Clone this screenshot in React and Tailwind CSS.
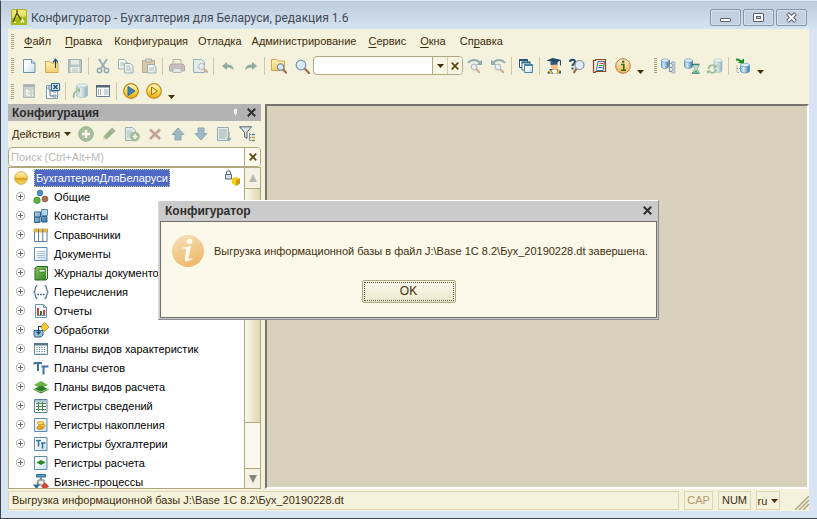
import React from "react";

function Svg({ children, size = 16, faded = false, className = "" }) {
  return (
    <svg
      aria-hidden="true"
      width={size}
      height={size}
      viewBox={`0 0 ${size} ${size}`}
      fill="none"
      className={`shrink-0 ${faded ? "opacity-50" : ""} ${className}`}
    >
      {children}
    </svg>
  );
}

function Gradients() {
  return (
    <svg aria-hidden="true" className="absolute size-0">
      <defs>
        <linearGradient id="g-page" x1="0" y1="0" x2="1" y2="1">
          <stop offset="0.3" stopColor="#ffffff" />
          <stop offset="1" stopColor="#c3dbe9" />
        </linearGradient>
        <linearGradient id="g-folder" x1="0" y1="0" x2="0" y2="1">
          <stop offset="0" stopColor="#fff3b4" />
          <stop offset="1" stopColor="#f2cf70" />
        </linearGradient>
        <linearGradient id="g-db" x1="0" y1="0" x2="1" y2="0">
          <stop offset="0" stopColor="#7db4d8" />
          <stop offset="0.35" stopColor="#d5ebf7" />
          <stop offset="1" stopColor="#32719f" />
        </linearGradient>
        <linearGradient id="g-gold" x1="0" y1="0" x2="0" y2="1">
          <stop offset="0" stopColor="#fffbd0" />
          <stop offset="0.5" stopColor="#fbd950" />
          <stop offset="1" stopColor="#e9a81c" />
        </linearGradient>
        <linearGradient id="g-ball" x1="0" y1="0" x2="0" y2="1">
          <stop offset="0" stopColor="#fff6c4" />
          <stop offset="0.48" stopColor="#f3cd55" />
          <stop offset="0.52" stopColor="#d59f1c" />
          <stop offset="1" stopColor="#ffe36b" />
        </linearGradient>
        <linearGradient id="g-info" x1="0" y1="0" x2="0" y2="1">
          <stop offset="0" stopColor="#fff2d6" />
          <stop offset="1" stopColor="#f4b24c" />
        </linearGradient>
        <linearGradient id="g-big" x1="0" y1="0" x2="0.4" y2="1">
          <stop offset="0" stopColor="#f6e2c0" />
          <stop offset="1" stopColor="#eebb6c" />
        </linearGradient>
        <linearGradient id="g-green" x1="0" y1="0" x2="1" y2="1">
          <stop offset="0" stopColor="#8fc95c" />
          <stop offset="1" stopColor="#2d7d24" />
        </linearGradient>
        <linearGradient id="g-blue" x1="0" y1="0" x2="1" y2="1">
          <stop offset="0" stopColor="#b9dcf0" />
          <stop offset="1" stopColor="#2f6c98" />
        </linearGradient>
        <linearGradient id="g-app" x1="0" y1="0" x2="0" y2="1">
          <stop offset="0" stopColor="#f7ee8a" />
          <stop offset="1" stopColor="#c9cd1c" />
        </linearGradient>
      </defs>
    </svg>
  );
}

const Database = ({ x = 0, y = 0, w = 9, h = 12 }) => (
  <g>
    <path
      d={`M${x} ${y + 2}v${h - 4}c0 2.6 ${w} 2.6 ${w} 0v${-(h - 4)}z`}
      fill="url(#g-db)"
      stroke="#4883aa"
      strokeWidth="0.6"
    />
    <ellipse cx={x + w / 2} cy={y + 2} rx={w / 2} ry="1.7" fill="#dff0f9" stroke="#5b94b8" strokeWidth="0.6" />
  </g>
);

const Lens = ({ x, y, r = 3 }) => (
  <g>
    <path d={`M${x + r * 0.8} ${y + r * 0.8}l${r} ${r}`} stroke="#a56a52" strokeWidth="2.2" strokeLinecap="round" />
    <circle cx={x} cy={y} r={r} fill="#d6ebfa" stroke="#7b93ad" strokeWidth="1.2" />
    <path d={`M${x - r / 2} ${y}a${r / 2} ${r / 2} 0 0 1 ${r / 2} ${-r / 2}`} stroke="#fff" strokeWidth="1" />
  </g>
);

const icons = {
  newFile: (
    <>
      <path d="M2.5 1.5h8l3.5 3.5v9.5h-11.5z" fill="url(#g-page)" stroke="#6d93ab" />
      <path d="M10.5 1.5v3.5h3.5" fill="#dceaf2" stroke="#6d93ab" />
    </>
  ),
  open: (
    <>
      <path d="M1.500 3.500h4.500l1 1.500h7v9.500h-12.500z" fill="url(#g-folder)" stroke="#d6a84c" />
      <path d="M11.500 10v-8M9 4.300l2.500-3 2.500 3" stroke="#26485c" strokeWidth="1.200" />
    </>
  ),
  save: (
    <>
      <path d="M1.500 1.500h13v13h-13z" fill="#7898ad" stroke="#4f7088" />
      <path d="M4 2h8v4.500h-8z" fill="#dbe6ec" />
      <path d="M3.500 9h9v5.500h-9z" fill="#e9eff2" />
      <path d="M5 11h6M5 13h6" stroke="#7593a7" />
    </>
  ),
  cut: (
    <>
      <path d="M4 1l6 9.500M12 1l-6 9.500" stroke="#3f6f96" strokeWidth="2" />
      <circle cx="4.500" cy="12.500" r="2.200" stroke="#3a608a" strokeWidth="1.500" />
      <circle cx="11.500" cy="12.500" r="2.200" stroke="#3a608a" strokeWidth="1.500" />
    </>
  ),
  copy: (
    <>
      <path d="M.5 1.500h6l2.500 2.500v7h-8.500z" fill="url(#g-page)" stroke="#3f7396" />
      <path d="M2 5h4M2 7h4" stroke="#5c8cab" />
      <path d="M6.500 5.500h6l2.500 2.500v7h-8.500z" fill="url(#g-page)" stroke="#3f7396" />
      <path d="M8 8h4M8 10h5M8 12h5" stroke="#5c8cab" />
    </>
  ),
  paste: (
    <>
      <path d="M1.500 2.500h12v12h-12z" fill="#c0a173" stroke="#8d6b47" />
      <path d="M4.500 1h6v3h-6z" fill="#a9b8c1" stroke="#6a7b86" />
      <path d="M6.500 6.500h6l2.500 2.500v6h-8.500z" fill="url(#g-page)" stroke="#3f7396" />
      <path d="M8 10h5M8 12h5" stroke="#5c8cab" />
    </>
  ),
  print: (
    <>
      <path d="M4 1.500h8v5h-8z" fill="#eee7dc" stroke="#8a6c5a" />
      <path d="M2 6h12l1.500 2v5h-15v-5z" fill="#9b8da0" stroke="#6c6476" />
      <path d="M4 10.500h8v4h-8z" fill="#d5e6f2" stroke="#6f86a0" />
      <path d="M12 8.500h2" stroke="#d94b3a" strokeWidth="1.500" />
    </>
  ),
  preview: (
    <>
      <path d="M1.500 1.500h8l3 3v10h-11z" fill="#d5e4ee" stroke="#3f7396" />
      <Lens x={9.500} y={8.500} r={3} />
    </>
  ),
  undo: <path d="M2 8l5-4v2.500c4.500 0 7 2 6.500 6-1.200-2.300-3-3-6.500-3v2.500z" fill="#2c6960" />,
  redo: <path d="M14 8l-5-4v2.500c-4.500 0-7 2-6.500 6 1.200-2.300 3-3 6.500-3v2.500z" fill="#2c6960" />,
  find: (
    <>
      <path d="M.5 1.500h5l1 1.500h7v9.500h-13z" fill="url(#g-folder)" stroke="#d6a84c" />
      <Lens x={9.500} y={9} r={3.200} />
    </>
  ),
  zoom: <Lens x={7} y={7} r={4.800} />,
  findNext: (
    <>
      <path d="M1 5c3-4 9-4 12 0" stroke="#2f6c8c" strokeWidth="1.800" />
      <path d="M15 1.500v5.500h-5.500z" fill="#2f6c8c" />
      <Lens x={7} y={9} r={2.800} />
    </>
  ),
  findPrev: (
    <>
      <path d="M15 5c-3-4-9-4-12 0" stroke="#2f6c8c" strokeWidth="1.800" />
      <path d="M1 1.500v5.500h5.500z" fill="#2f6c8c" />
      <Lens x={8} y={9} r={2.800} />
    </>
  ),
  windows: (
    <>
      <path d="M1.500 1.500h8v8h-8z" fill="#fff" stroke="#27577c" />
      <path d="M1 1h9v2h-9z" fill="#27577c" />
      <path d="M4 4h8v8h-8z" fill="#fff" stroke="#3d7196" />
      <path d="M3.500 3.500h9v2h-9z" fill="#3d7196" />
      <path d="M6.500 6.500h8v8h-8z" fill="url(#g-page)" stroke="#4883aa" />
      <path d="M6 6h9v2h-9z" fill="#4883aa" />
    </>
  ),
  graduate: (
    <>
      <path d="M1 15.500l3-4.500h7l4 2v2.500z" fill="#24536f" />
      <path d="M5 12l2.500 3.500h3l1-4z" fill="#fff" />
      <path d="M3 12.500l3 3M13 12l-1.500 3.500" stroke="#f5bf26" strokeWidth="2" />
      <path d="M5 5h7v4c0 4-7 4-7 0z" fill="#f4c48e" />
      <path d="M.5 2.500l6-2.500 9 2-5.500 3z" fill="#234a66" />
      <path d="M4.500 4v3l7-.5v-2.500z" fill="#2d5a78" />
      <path d="M14.500 2.500v5" stroke="#234a66" />
    </>
  ),
  help: (
    <>
      <path d="M1 4c0-3 5-3 5 0 0 2-2.500 1.800-2.500 4M3.500 9.500v2" stroke="#22506e" strokeWidth="2" />
      <path d="M8 10l-3.500 5" stroke="#a56a52" strokeWidth="2.200" />
      <circle cx="10.500" cy="7" r="4.500" fill="#dbeefa" stroke="#8c8b96" strokeWidth="1.200" />
    </>
  ),
  syntax: (
    <>
      <path d="M1.500 2.500h2v-1h10v12h-10v1h-2z" fill="#fbe8d6" stroke="#8a4a28" strokeWidth="1.200" />
      <path d="M4.500 12.500l1.500-9h6.500l-1.500 9z" fill="#fff" stroke="#336fa0" />
      <path d="M7.500 5.500h4" stroke="#d64533" />
      <path d="M7 7.500h4" stroke="#3f9b4c" />
      <path d="M6.500 9.500h4" stroke="#2867b0" />
    </>
  ),
  info: (
    <>
      <circle cx="8" cy="8" r="7.300" fill="url(#g-info)" stroke="#b37a3c" />
      <path d="M6 6.500h2.800v5.500M6 12.200h5" stroke="#356b1c" strokeWidth="1.600" />
      <circle cx="8.200" cy="3.800" r="1.200" fill="#356b1c" />
    </>
  ),
  dbTree: (
    <>
      <Database x={0.500} y={0.500} w={7} h={10} />
      <path d="M8.500 2v12M8.500 5.500h3M8.500 9.500h3M8.500 13.500h3" stroke="#7e8e98" />
      <path d="M11 4h3v3h-3zM11 8h3v3h-3zM11 12h3v3h-3z" fill="#d4dde2" stroke="#8b9aa4" strokeWidth="0.700" />
    </>
  ),
  dbWait: (
    <>
      <Database x={0.500} y={0.500} w={8} h={10} />
      <path d="M8 6.500h7.500M8 15h7.500" stroke="#37657c" strokeWidth="1.400" />
      <path d="M9 7h6c0 3-2 3-2 4s2 1 2 4h-6c0-3 2-3 2-4s-2-1-2-4z" fill="#bde6c3" stroke="#6d9c92" strokeWidth="0.700" />
      <path d="M10 14.500l2-2.500 2 2.500z" fill="#37a250" />
    </>
  ),
  dbSync: (
    <>
      <Database x={7} y={0.500} w={8} h={14} />
      <path d="M1.500 11c0-4 5-5 7-2M9 11c0 4-5 5-7 2" stroke="#498e53" strokeWidth="1.700" />
      <path d="M6.500 9.500h4v-3.500zM4 12.500H0v3.500z" fill="#498e53" />
    </>
  ),
  dbUpdate: (
    <>
      <path d="M2 7.500v7h3M2 10.500h3" stroke="#889" strokeDasharray="1 1" />
      <Database x={5.500} y={5} w={9} h={10} />
      <path d="M1 1.500c3 0 5 1 5.500 4" stroke="#188e24" strokeWidth="2" />
      <path d="M2.500 5h6.500v-4.500z" fill="#188e24" />
    </>
  ),
  configTree: (
    <>
      <path d="M2.500 1.500h11v13h-11z" fill="#a7b4bd" stroke="#6f8594" />
      <path d="M3 2h10v2h-10z" fill="#5b7384" />
      <path d="M6 6v6h3M6 8.500h3M11 8.500h1M11 12h1" stroke="#fff" strokeWidth="1.400" />
    </>
  ),
  configClose: (
    <>
      <path d="M2.500 2.500h11v13h-11z" fill="#fff" stroke="#7899b0" />
      <path d="M6 4v9h3M6 8h3" stroke="#55758c" />
      <path d="M4 4h4v2h-4zM9 7h3v2h-3zM9 12h3v2h-3z" fill="#fff" stroke="#55758c" strokeWidth="0.800" />
      <path d="M7.500.5h8v7h-8z" fill="#d7ebf6" stroke="#2e6288" />
      <path d="M9.500 2l4 4M13.500 2l-4 4" stroke="#1d4d73" strokeWidth="1.500" />
    </>
  ),
  dbLoad: (
    <>
      <Database x={4.500} y={0.500} w={11} h={14} />
      <path d="M2 15c-1-4 0-6 3-7" stroke="#498e53" strokeWidth="1.800" />
      <path d="M3.500 5.500h4.500v4.500z" fill="#498e53" />
    </>
  ),
  form: (
    <>
      <path d="M1.500 2.500h13v11h-13z" fill="#f7fafc" stroke="#6c7f8b" />
      <path d="M1 2h14v2.500h-14z" fill="#50687a" />
      <path d="M3 7h4M3 9h4M3 11h4" stroke="#76532f" strokeDasharray="1 1" />
      <path d="M9 6h4.500v6h-4.500z" fill="#ccd7de" />
    </>
  ),
  debug: (
    <>
      <circle cx="8" cy="8" r="7.300" fill="url(#g-gold)" stroke="#b88415" strokeWidth="1.200" />
      <path d="M5 3.500l7 4.500-7 4.500z" fill="#3d88bb" stroke="#2c6791" />
    </>
  ),
  run: (
    <>
      <circle cx="8" cy="8" r="7.300" fill="url(#g-gold)" stroke="#c28c1e" strokeWidth="1.200" />
      <path d="M5.500 4l6 4-6 4z" fill="#fbe48a" stroke="#9c7719" />
    </>
  ),
  add: (
    <>
      <circle cx="8" cy="8" r="7.300" fill="#5a8c58" stroke="#42753f" />
      <path d="M8 4v8M4 8h8" stroke="#fff" strokeWidth="2.400" />
    </>
  ),
  edit: (
    <>
      <path d="M2.500 10.500l7-7.500 3.500 3.500-7.500 7z" fill="#3b7a3b" />
      <path d="M2.500 10.500l-.5 3.800 3.500-.8z" fill="#dcbf8e" />
      <path d="M9.500 3l1.800-1.500 3.200 3.500-1.500 1.500z" fill="#5f6560" />
    </>
  ),
  copyAdd: (
    <>
      <path d="M1.500 1.500h7l3 3v10h-10z" fill="#d5e4ee" stroke="#3f7396" />
      <path d="M3 5h5M3 7h6M3 9h5M3 11h4" stroke="#5c8cab" />
      <circle cx="11" cy="10.500" r="4.300" fill="#5a8c58" stroke="#42753f" />
      <path d="M11 8v5M8.500 10.500h5" stroke="#fff" strokeWidth="1.500" />
    </>
  ),
  remove: <path d="M3 3.500l10 9.500M13 3.500l-10 9.500" stroke="#8f5a52" strokeWidth="2.600" />,
  up: <path d="M8 2l6 6.500h-3v5.500h-6v-5.500h-3z" fill="#4c83ac" stroke="#2f6088" />,
  down: <path d="M8 14l6-6.500h-3V2h-6v5.500h-3z" fill="#4c83ac" stroke="#2f6088" />,
  sort: (
    <>
      <path d="M1.500 1.500h11v13h-11z" fill="#d5e4ee" stroke="#3f6c8a" />
      <path d="M3 4h8M3 6h8M3 8h8M3 10h8M3 12h6" stroke="#3f6c8a" />
      <path d="M13 6v8M11 12l2 2.500 2-2.500" stroke="#27577c" strokeWidth="1.200" />
    </>
  ),
  filter: (
    <>
      <path d="M.5.800h12l-4.500 5.500v6l-2.500-1.500v-4.500z" fill="#d9dee2" stroke="#59616a" />
      <path d="M10.500 7v8M10.500 8.500h2M10.500 11.500h2M10.500 14.500h2" stroke="#7e8e98" />
      <path d="M13 8.500h3" stroke="#4c8bb5" strokeWidth="1.500" />
      <path d="M13 11.500h3" stroke="#d0a62c" strokeWidth="1.500" />
      <path d="M13 14.500h3" stroke="#6d9c4e" strokeWidth="1.500" />
    </>
  ),
  common: (
    <>
      <circle cx="7" cy="4" r="2.900" fill="#4c8ebc" stroke="#2c6791" strokeWidth="0.600" />
      <circle cx="4" cy="11.300" r="3.300" fill="#57b33a" stroke="#37832a" strokeWidth="0.600" />
      <circle cx="12" cy="10" r="3" fill="#a9704d" stroke="#82502f" strokeWidth="0.600" />
    </>
  ),
  constants: (
    <>
      <path d="M8.500 1.500h6v6h-6z" fill="#b5d3e6" stroke="#5b8fb2" />
      <path d="M1.500 4h6v5h-6zM1.500 9.500h5.500v5h-5.500zM8.500 8.500h5.500v5.500h-5.500z" fill="url(#g-blue)" stroke="#2f658c" />
    </>
  ),
  catalogs: (
    <>
      <path d="M1.500 2.500h12.500v12h-12.500z" fill="#fff" stroke="#5d7f97" />
      <path d="M1 2h13.500v3h-13.500z" fill="#edc14c" stroke="#b48a2b" strokeWidth="0.600" />
      <path d="M5.500 2v12M9.800 2v12" stroke="#5d7f97" />
    </>
  ),
  documents: (
    <>
      <path d="M1.500 1.500h12.500v13h-12.500z" fill="url(#g-page)" stroke="#5d8eae" />
      <path d="M4 5.500h8M4 7.500h8M4 9.500h8M4 11.500h8" stroke="#a8c1d1" />
    </>
  ),
  journals: (
    <>
      <path d="M2 3l2-1.500h10.500v12l-1.500 1.500h-11z" fill="url(#g-green)" stroke="#286b20" />
      <path d="M6 4.500h6v2.500h-6z" fill="#e3f3cf" stroke="#286b20" strokeWidth="0.600" />
      <path d="M13.500 3v11" stroke="#dbe9cf" />
    </>
  ),
  enums: (
    <>
      <path d="M4.500 1.500c-3.500 0-1 5-3.500 6.500 2.500 1.500 0 6.500 3.500 6.500M11.500 1.500c3.500 0 1 5 3.500 6.500-2.500 1.500 0 6.500-3.500 6.500" stroke="#4d7488" strokeWidth="1.200" />
      <path d="M4.500 10.500h1.500M7.200 10.500h1.500M9.900 10.500h1.500" stroke="#26485c" strokeWidth="1.500" />
    </>
  ),
  reports: (
    <>
      <path d="M2.500 1.500h8l3 3v10h-11z" fill="#fff" stroke="#6d93ab" />
      <path d="M10.500 1.500v3h3" stroke="#6d93ab" />
      <path d="M5 5v7" stroke="#cd3f31" strokeWidth="2" />
      <path d="M8 8v4" stroke="#2f6d46" strokeWidth="2" />
      <path d="M11 7v5" stroke="#cd3f31" strokeWidth="2" />
      <path d="M4 12.500h8.500" stroke="#6d93ab" />
    </>
  ),
  processing: (
    <>
      <path d="M11.500.5l4.500 4.500-4.500 4.500-4-4.500z" fill="#f6cd2f" stroke="#b8881a" strokeWidth="0.800" />
      <path d="M1 8.500h9v4.500l-2 2h-6l-1-2z" fill="#97c2dd" stroke="#2c648b" />
      <path d="M5.500 4v7M3.500 9.500l2 2.500 2-2.500M5.500 4.500h3" stroke="#20465f" strokeWidth="1.200" />
    </>
  ),
  charPlans: (
    <>
      <path d="M1.500 2.500h13v11h-13z" fill="#fff" stroke="#698698" />
      <path d="M1 2h14v2.500h-14z" fill="#55768c" />
      <path d="M4 6v6.500M6.500 6v6.500M9 6v6.500M11.500 6v6.500" stroke="#55768c" strokeWidth="1.200" strokeDasharray="1 1" />
    </>
  ),
  accounts: (
    <path d="M1 3h8M5 3v8M8.500 6.500h6.500M10.500 6.500v8M1.500 2.500v2M14.500 5.500v2" stroke="#38749f" strokeWidth="2" />
  ),
  calcPlans: (
    <>
      <path d="M0 10.500l8-4 8 4-8 4z" fill="#2c7c22" />
      <path d="M1 6l7-4 7 4-7 3.500z" fill="#6ab545" />
      <path d="M0 9.500l8 3.500 8-3.500" stroke="#bfe3a4" strokeWidth="0.800" />
      <path d="M6 7h4v3h-4z" fill="#2c7c22" />
    </>
  ),
  infoReg: (
    <>
      <path d="M1.500 1.500h12.500v13h-12.500z" fill="#fff" stroke="#5d7f97" />
      <path d="M2 2h11.500v2.500h-11.500z" fill="#a9c3d2" />
      <path d="M3 5.500h10M3 8.500h10M3 11.500h10M5.500 4v9M9.500 4v9" stroke="#4e8a4e" strokeWidth="1.200" />
    </>
  ),
  accumReg: (
    <>
      <path d="M1.500 1.500h12.500v13h-12.500z" fill="url(#g-page)" stroke="#5d8eae" />
      <ellipse cx="7" cy="10.800" rx="3.500" ry="1.700" fill="#e7a51b" stroke="#b97a12" strokeWidth="0.600" />
      <ellipse cx="9" cy="8.500" rx="3.300" ry="1.600" fill="#f4c33a" stroke="#b97a12" strokeWidth="0.600" />
      <ellipse cx="7.500" cy="6" rx="3.300" ry="1.600" fill="#f9d860" stroke="#b97a12" strokeWidth="0.600" />
    </>
  ),
  acctReg: (
    <>
      <path d="M1.500 1.500h12.500v13h-12.500z" fill="url(#g-page)" stroke="#5d8eae" />
      <path d="M3 4.500h5M5.500 4.500v6M8 7h4.500M9.500 7v5.500" stroke="#38749f" strokeWidth="1.700" />
    </>
  ),
  calcReg: (
    <>
      <path d="M1.500 1.500h12.500v13h-12.500z" fill="url(#g-page)" stroke="#5d8eae" />
      <path d="M3.500 7.500l4.500-2.500 4.500 2.500-4.500 2.500z" fill="#2f8224" />
    </>
  ),
  business: (
    <>
      <path d="M3.500.5h9v2.500h-9z" fill="#5aa0cc" stroke="#2c6791" />
      <path d="M8 3v3M4 10l2-2h4l2 3" stroke="#4f6c80" strokeWidth="1.300" />
      <path d="M5 6h6v5h-6z" fill="#f5ecd2" stroke="#55768c" />
      <path d="M0 10.500h7l-3.500 4.500z" fill="#2f6c98" />
      <path d="M12 8.500l4 3.700-4 3.800-4-3.800z" fill="#d5432f" />
    </>
  ),
};

function ToolButton({ icon, label, off }) {
  return (
    <button type="button" aria-label={label} disabled={off} className="flex h-5 w-[23px] shrink-0 items-center justify-center">
      <Svg faded={off}>{icons[icon]}</Svg>
    </button>
  );
}

const Sep = () => <span className="mx-[2px] h-[18px] w-px shrink-0 bg-[#cdc8a8]" />;

const Grip = () => (
  <span className="flex h-[15px] w-[3px] shrink-0 flex-col justify-between">
    {[0, 1, 2, 3, 4, 5, 6, 7].map((i) => (
      <span key={i} className="h-px w-full bg-[#aaa47f]" />
    ))}
  </span>
);

const Caret = () => (
  <svg aria-hidden="true" width="7" height="4" viewBox="0 0 7 4" className="shrink-0">
    <path d="M0 0h7L3.500 4z" fill="#43300a" />
  </svg>
);

const More = ({ label }) => (
  <button type="button" aria-label={label} className="flex h-4 w-3 shrink-0 items-end justify-center">
    <Caret />
  </button>
);

const Cross = ({ color = "#2e2e2e", size = 9, weight = 2 }) => (
  <svg aria-hidden="true" width={size} height={size} viewBox="0 0 9 9" className="shrink-0">
    <path d="M.8.800l7.400 7.400M8.200.800L.8 8.200" stroke={color} strokeWidth={weight} />
  </svg>
);

const menus = [
  ["", "Ф", "айл"],
  ["", "П", "равка"],
  ["Конфигурация", "", ""],
  ["Отладка", "", ""],
  ["Администрирование", "", ""],
  ["", "С", "ервис"],
  ["", "О", "кна"],
  ["Сп", "р", "авка"],
];

const tree = [
  ["common", "Общие"],
  ["constants", "Константы"],
  ["catalogs", "Справочники"],
  ["documents", "Документы"],
  ["journals", "Журналы документов"],
  ["enums", "Перечисления"],
  ["reports", "Отчеты"],
  ["processing", "Обработки"],
  ["charPlans", "Планы видов характеристик"],
  ["accounts", "Планы счетов"],
  ["calcPlans", "Планы видов расчета"],
  ["infoReg", "Регистры сведений"],
  ["accumReg", "Регистры накопления"],
  ["acctReg", "Регистры бухгалтерии"],
  ["calcReg", "Регистры расчета"],
  ["business", "Бизнес-процессы"],
];

function CaptionButton({ label, children }) {
  return (
    <button
      type="button"
      aria-label={label}
      className="flex h-[17px] w-[31px] items-center justify-center rounded-xs border border-[#8593ab] bg-[#c3d1e1] shadow-[inset_0_0_0_1px_#d6e1ed]"
    >
      <svg aria-hidden="true" width="13" height="11" viewBox="0 0 13 11" fill="none">
        {children}
      </svg>
    </button>
  );
}

function TitleBar() {
  return (
    <header className="flex h-7 shrink-0 items-start gap-1 pl-[3px]">
      <svg aria-hidden="true" width="16" height="16" viewBox="0 0 16 16" className="mt-2 shrink-0">
        <rect x="0.500" y="0.500" width="15" height="15" rx="1.500" fill="url(#g-app)" stroke="#b0ad2a" />
        <path d="M0 9h5l3-2 4 1 4-1v9H0z" fill="#a9b912" />
        <path d="M6 1v3l-4 9M6 4l4 7" stroke="#4b4a16" strokeWidth="1.300" fill="none" />
        <path d="M10 14l1.500-3.500 1.500 3M3 13.500h2" stroke="#fff" strokeWidth="1.200" fill="none" />
      </svg>
      <h1 className="min-w-0 flex-1 truncate pt-2 font-[Roboto,sans-serif] text-[12px] leading-[18px] text-[#414b57]">
        Конфигуратор - Бухгалтерия для Беларуси, редакция 1.6
      </h1>
      <div className="mt-2 flex gap-[2px] pr-[2px]">
        <CaptionButton label="Свернуть">
          <rect x="1.500" y="6.500" width="10" height="3" rx="0.500" fill="#fff" stroke="#5a6374" />
        </CaptionButton>
        <CaptionButton label="Развернуть">
          <rect x="1.500" y="1.500" width="10" height="8" rx="0.500" fill="#fff" stroke="#5a6374" />
          <rect x="4.500" y="4.500" width="4" height="2" fill="#c3d1e1" stroke="#5a6374" />
        </CaptionButton>
        <CaptionButton label="Закрыть">
          <path d="M2.500 1.500l8 8M10.500 1.500l-8 8" stroke="#5a6374" strokeWidth="4" />
          <path d="M3 2l7 7M10 2l-7 7" stroke="#fff" strokeWidth="2" />
        </CaptionButton>
      </div>
    </header>
  );
}

function Toolbars() {
  return (
    <div className="flex shrink-0 flex-col px-[3px]">
      <nav aria-label="Главное меню" className="flex h-[24px] items-center">
        <Grip />
        <div className="ml-[3px] flex">
          {menus.map(([a, b, c]) => (
            <button type="button" key={a + b + c} className={`whitespace-nowrap ${b ? "px-[7px]" : "px-[5px]"}`}>
              {a}
              <span className="underline underline-offset-2">{b}</span>
              {c}
            </button>
          ))}
        </div>
      </nav>
      <div role="toolbar" aria-label="Стандартная" className="flex h-[25px] items-center">
        <Grip />
        <span className="w-[3px] shrink-0" />
        <ToolButton icon="newFile" label="Новый документ" />
        <ToolButton icon="open" label="Открыть" />
        <ToolButton icon="save" label="Сохранить" off />
        <Sep />
        <ToolButton icon="cut" label="Вырезать" off />
        <ToolButton icon="copy" label="Копировать" off />
        <ToolButton icon="paste" label="Вставить" off />
        <Sep />
        <ToolButton icon="print" label="Печать" off />
        <ToolButton icon="preview" label="Просмотр" off />
        <Sep />
        <ToolButton icon="undo" label="Отменить" off />
        <ToolButton icon="redo" label="Вернуть" off />
        <Sep />
        <ToolButton icon="find" label="Глобальный поиск" />
        <ToolButton icon="zoom" label="Найти" />
        <div className="flex h-[19px] w-[150px] shrink-0 overflow-hidden rounded-sm border border-[#b0a97f] bg-white">
          <input type="text" aria-label="Строка поиска" className="min-w-0 flex-1 px-1 outline-none" />
          <button type="button" aria-label="История поиска" className="flex w-[15px] items-center justify-center border-l border-[#b0a97f] bg-[#f7f4e2]">
            <Caret />
          </button>
          <button type="button" aria-label="Очистить поиск" className="flex w-[15px] items-center justify-center border-l border-[#d5cfae] bg-[#f7f4e2]">
            <Cross color="#594a12" size={8} />
          </button>
        </div>
        <ToolButton icon="findNext" label="Найти следующий" off />
        <ToolButton icon="findPrev" label="Найти предыдущий" off />
        <Sep />
        <ToolButton icon="windows" label="Окна" />
        <Sep />
        <ToolButton icon="graduate" label="Обучение" />
        <ToolButton icon="help" label="Поиск в справке" />
        <ToolButton icon="syntax" label="Синтакс-помощник" />
        <ToolButton icon="info" label="О программе" />
        <More label="Другие команды" />
        <span className="w-2 shrink-0" />
        <Grip />
        <ToolButton icon="dbTree" label="Конфигурация базы данных" />
        <ToolButton icon="dbWait" label="Обновить конфигурацию" />
        <ToolButton icon="dbSync" label="Сравнить" off />
        <Sep />
        <ToolButton icon="dbUpdate" label="Загрузить" />
        <More label="Другие команды базы данных" />
      </div>
      <div role="toolbar" aria-label="Конфигурация" className="flex h-[26px] items-center">
        <Grip />
        <span className="w-[3px] shrink-0" />
        <ToolButton icon="configTree" label="Открыть конфигурацию" off />
        <ToolButton icon="configClose" label="Закрыть конфигурацию" />
        <Sep />
        <ToolButton icon="dbLoad" label="Обновить базу данных" off />
        <ToolButton icon="form" label="Окно конфигурации" />
        <Sep />
        <ToolButton icon="debug" label="Начать отладку" />
        <ToolButton icon="run" label="Запустить" />
        <More label="Другие команды запуска" />
      </div>
    </div>
  );
}

function ConfigPanel() {
  return (
    <aside className="flex min-h-0 w-[253px] shrink-0 flex-col">
      <div className="flex h-[17px] shrink-0 items-center bg-[#b3b3b3] pl-1 pr-[5px]">
        <h2 className="flex-1 text-[12px] font-bold text-[#2e2e2e]">Конфигурация</h2>
        <button type="button" aria-label="Закрепить" className="mr-2">
          <svg aria-hidden="true" width="7" height="9" viewBox="0 0 7 9">
            <path d="M2.500 1.500h2v4h-2z" fill="#e4e4e4" stroke="#fff" />
            <path d="M3.500 5v3" stroke="#e4e4e4" />
          </svg>
        </button>
        <button type="button" aria-label="Закрыть панель">
          <Cross />
        </button>
      </div>
      <div role="toolbar" aria-label="Действия" className="flex h-[26px] shrink-0 items-center pl-1">
        <button type="button" className="flex w-[62px] items-center justify-between pr-[3px]">
          Действия
          <Caret />
        </button>
        <ToolButton icon="add" label="Добавить" off />
        <ToolButton icon="edit" label="Изменить" off />
        <ToolButton icon="copyAdd" label="Добавить копированием" off />
        <ToolButton icon="remove" label="Удалить" off />
        <ToolButton icon="up" label="Переместить вверх" off />
        <ToolButton icon="down" label="Переместить вниз" off />
        <ToolButton icon="sort" label="Упорядочить" off />
        <ToolButton icon="filter" label="Отбор" />
      </div>
      <div className="flex h-[20px] shrink-0 overflow-hidden rounded-sm border border-[#b0a97f] bg-white">
        <input
          type="text"
          aria-label="Поиск"
          placeholder="Поиск (Ctrl+Alt+M)"
          className="min-w-0 flex-1 px-[2px] outline-none placeholder:text-[#b9b9b9]"
        />
        <button type="button" aria-label="Очистить" className="flex w-4 items-center justify-center border-l border-[#b0a97f] bg-[#fbf9ee]">
          <Cross color="#594a12" size={8} />
        </button>
      </div>
      <div className="flex min-h-0 flex-1 border border-[#b0a97f] bg-white">
        <ul role="tree" aria-label="Конфигурация" className="min-h-0 min-w-0 flex-1 overflow-hidden text-black">
          <li role="treeitem" aria-selected="true" className="flex h-[19px] items-center pl-[5px] pr-1">
            <Svg className="mr-1">
              <circle cx="7" cy="8" r="6.300" fill="url(#g-ball)" stroke="#c89a2c" strokeWidth="0.800" />
            </Svg>
            <span className="h-[18px] border border-dotted border-[#c7cf8a] bg-[#4e68c3] px-px leading-4 text-white">
              БухгалтерияДляБеларуси
            </span>
            <Svg className="ml-auto">
              <path d="M2.500 5V3c0-3 4-3 4 0v2" stroke="#5c6b78" strokeWidth="1.200" />
              <path d="M1.500 4.500h6v4.500h-6z" fill="#d5dde3" stroke="#5c6b78" />
              <path d="M8 8.500l4-1.500 4 1.500v5l-4 2.500-4-2.500z" fill="#f5cd22" />
              <path d="M12 10l4-1.500v5l-4 2.500z" fill="#d29c10" />
            </Svg>
          </li>
          {tree.map(([icon, name]) => (
            <li role="treeitem" key={icon} className="flex h-[19px] items-center pl-[6px]">
              <svg aria-hidden="true" width="11" height="11" viewBox="0 0 11 11" fill="none" className={`mr-[7px] shrink-0 ${icon === "business" ? "invisible" : ""}`}>
                <circle cx="5.500" cy="5.500" r="4.200" fill="#fafafa" stroke="#a6a6a6" strokeWidth="0.900" />
                <path d="M5.500 3v5M3 5.500h5" stroke="#6a6a6a" />
              </svg>
              <Svg className="mr-[5px]">{icons[icon]}</Svg>
              <span className="whitespace-nowrap">{name}</span>
            </li>
          ))}
        </ul>
        <div aria-hidden="true" className="flex w-4 shrink-0 flex-col border-l border-[#b0a97f] bg-[#fbf9ee]">
          <span className="flex h-[20px] shrink-0 items-center justify-center bg-[#f5f2e2]">
            <svg width="8" height="8" viewBox="0 0 8 8">
              <path d="M4 0l4 8H0z" fill="#b9b9b4" />
            </svg>
          </span>
          <span className="flex-[233] border-y border-[#b0a97f] bg-linear-to-r from-[#fbf9ea] to-[#ddd7b0]" />
          <span className="flex-[45]" />
          <span className="flex h-[20px] shrink-0 items-center justify-center border-t border-[#b0a97f] bg-[#f5f2e2]">
            <svg width="8" height="8" viewBox="0 0 8 8">
              <path d="M0 0h8L4 8z" fill="#85857f" />
            </svg>
          </span>
        </div>
      </div>
    </aside>
  );
}

function StatusBar() {
  return (
    <footer className="flex h-[22px] shrink-0 items-end gap-[5px] pb-px">
      <p className="h-[19px] min-w-0 flex-1 truncate border border-[#dcd7b9] pl-[3px] leading-[17px]">
        Выгрузка информационной базы J:\Base 1C 8.2\Бух_20190228.dt
      </p>
      <span className="h-[19px] w-[29px] border border-[#dcd7b9] text-center leading-[17px] text-[#b09a66]">CAP</span>
      <span className="h-[19px] w-[33px] border border-[#dcd7b9] text-center leading-[17px]">NUM</span>
      <button type="button" className="flex h-[19px] w-[24px] items-center justify-center gap-1 border border-[#dcd7b9]">
        ru
        <Caret />
      </button>
      <svg aria-hidden="true" width="14" height="14" viewBox="0 0 14 14" className="ml-[10px] shrink-0">
        <path d="M0 14L14 0M4 14L14 4M8 14l6-6" stroke="#b0a97f" strokeWidth="1.500" />
      </svg>
    </footer>
  );
}

function MessageDialog() {
  return (
    <div className="fixed inset-0 grid place-items-center">
      <section
        role="dialog"
        aria-labelledby="message-title"
        className="w-[501px] border border-t-white border-l-[#d9d9d9] border-r-[#8a8a8a] border-b-[#8a8a8a] bg-[#cbcbcb] px-px pb-px"
      >
        <div className="flex h-5 items-center pl-[5px] pr-[5px]">
          <h2 id="message-title" className="flex-1 text-[12px] font-bold text-[#2e2e2e]">
            Конфигуратор
          </h2>
          <button type="button" aria-label="Закрыть">
            <Cross weight={2} />
          </button>
        </div>
        <div className="flex flex-col border border-[#6f6f6f] bg-[#fcf9ea] px-[11px] pt-[13px] pb-[14px]">
          <div className="flex items-center gap-[10px]">
            <svg aria-hidden="true" width="32" height="32" viewBox="0 0 32 32" fill="none" className="shrink-0">
              <circle cx="16" cy="16" r="16" fill="url(#g-big)" />
              <circle cx="17.500" cy="6.500" r="2.800" fill="#fffbee" />
              <path d="M10.500 12.500c3-.3 5-.8 8.500-1.500l-2.300 11.500c-.4 2 .8 1.800 3.300.2l.4.900c-3.500 3.400-8.500 4-7.700-.4l1.500-7.700c.3-1.700-.6-2.100-3.700-2z" fill="#fffbee" />
            </svg>
            <p className="whitespace-nowrap">Выгрузка информационной базы в файл J:\Base 1C 8.2\Бух_20190228.dt завершена.</p>
          </div>
          <button
            type="button"
            className="mt-[13px] h-[23px] w-[94px] self-center rounded-xs border border-[#b0a97f] bg-linear-to-b from-[#fcfaee] to-[#ebe7cd] p-px text-[12px]"
          >
            <span className="flex h-full items-center justify-center border border-dotted border-[#57512f]">OK</span>
          </button>
        </div>
      </section>
    </div>
  );
}

export default function App() {
  return (
    <div className="flex h-screen flex-col overflow-hidden border-y border-l border-[#3f454d] border-t-[#dfe7f0] bg-[#d8e5f2] bg-linear-to-b from-[#bccbdb] to-[#d8e5f2] to-[30px] pr-2 pb-[7px] pl-[7px] font-['Liberation_Sans',Arial,sans-serif] text-[11px] leading-4 text-[#3f2f0c]">
      <Gradients />
      <TitleBar />
      <div className="flex min-h-0 flex-1 flex-col bg-[#f4f1dd]">
        <Toolbars />
        <main className="flex min-h-0 flex-1 gap-1">
          <ConfigPanel />
          <div className="min-w-0 flex-1 border-2 border-t-[#75756d] border-l-[#75756d] border-r-white border-b-white bg-[#d8d2bc]" />
        </main>
        <StatusBar />
      </div>
      <MessageDialog />
    </div>
  );
}
